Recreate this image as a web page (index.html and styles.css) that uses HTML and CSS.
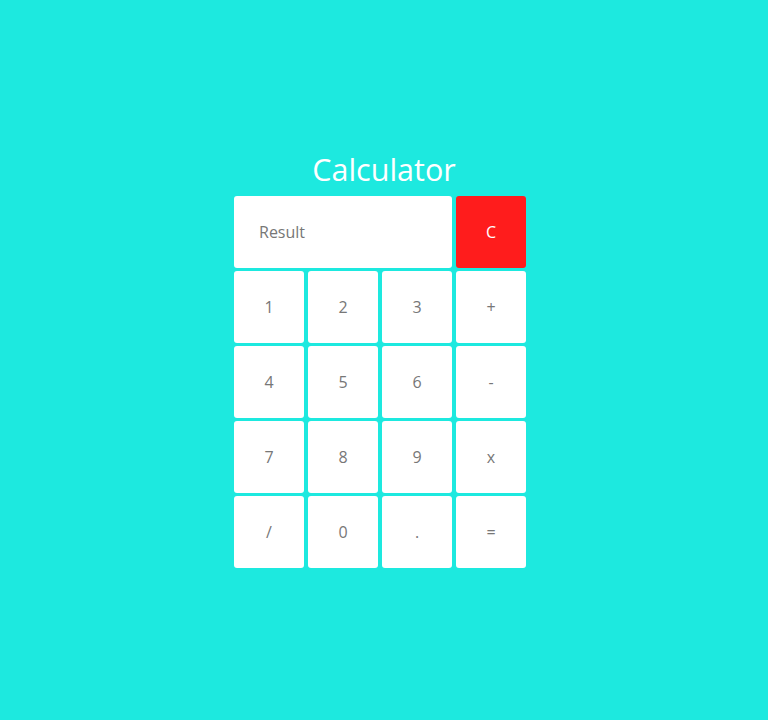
FILE: index.html
```html
<!DOCTYPE html>
<html>
<head>
<meta charset="utf-8">
<link rel="stylesheet" href="styles.css">
</head>
<body>
<div class="calc">
  <h1 class="title">Calculator</h1>
  <div class="grid">
    <div class="result">Result</div>
    <div class="key clear">C</div>
    <div class="key">1</div>
    <div class="key">2</div>
    <div class="key">3</div>
    <div class="key">+</div>
    <div class="key">4</div>
    <div class="key">5</div>
    <div class="key">6</div>
    <div class="key">-</div>
    <div class="key">7</div>
    <div class="key">8</div>
    <div class="key">9</div>
    <div class="key">x</div>
    <div class="key">/</div>
    <div class="key">0</div>
    <div class="key">.</div>
    <div class="key">=</div>
  </div>
</div>
</body>
</html>
```
FILE: styles.css
```css
html, body {
  margin: 0;
  padding: 0;
}
body {
  background: #1de9df;
  width: 768px;
  height: 720px;
  font-family: "Open Sans", sans-serif;
}
.calc {
  display: flex;
  flex-direction: column;
  align-items: center;
  padding-top: 148px;
}
.title {
  margin: 0 0 5px 0;
  font-size: 30.5px;
  font-weight: 400;
  color: #fff;
  line-height: 43px;
}
.grid {
  display: grid;
  grid-template-columns: repeat(4, 70px);
  grid-auto-rows: 72px;
  column-gap: 4px;
  row-gap: 3px;
  margin-right: 8px;
}
.result, .key {
  background: #fff;
  border-radius: 3px;
  color: #777;
  font-size: 16px;
  display: flex;
  align-items: center;
}
.result {
  grid-column: span 3;
  padding-left: 25px;
}
.key {
  justify-content: center;
}
.clear {
  background: #ff1c1c;
  color: #fff;
}
```
